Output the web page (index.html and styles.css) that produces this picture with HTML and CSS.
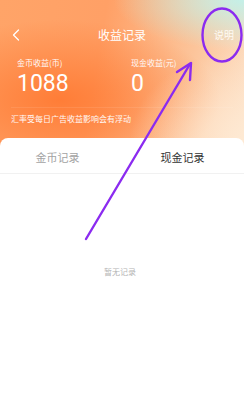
FILE: index.html
```html
<!DOCTYPE html>
<html lang="zh">
<head>
<meta charset="utf-8">
<link rel="stylesheet" href="styles.css">
</head>
<body>
<div class="page">
  <header class="hero">
    <div class="status"></div>
    <div class="nav">
      <svg class="back" width="8" height="12" viewBox="0 0 8 12"><path d="M6.5 1 L1.5 6 L6.5 11" fill="none" stroke="#fff" stroke-width="1.3" stroke-linecap="round" stroke-linejoin="round"/></svg>
      <div class="title">收益记录</div>
      <div class="help">说明</div>
    </div>
    <div class="stats">
      <div class="stat">
        <div class="label">金币收益(币)</div>
        <div class="value">1088</div>
      </div>
      <div class="stat">
        <div class="label">现金收益(元)</div>
        <div class="value">0</div>
      </div>
    </div>
    <div class="note">汇率受每日广告收益影响会有浮动</div>
  </header>
  <section class="card">
    <div class="tabs">
      <div class="tab">金币记录</div>
      <div class="tab active">现金记录</div>
    </div>
    <div class="empty">暂无记录</div>
  </section>
  <svg class="mark" width="244" height="418" viewBox="0 0 244 418">
    <ellipse cx="222" cy="35" rx="19.5" ry="26.5" fill="none" stroke="#8b2bf0" stroke-width="2.4"/>
    <path d="M86 239 L190 64" fill="none" stroke="#8b2bf0" stroke-width="2.4" stroke-linecap="round"/>
    <path d="M177 72 L191 63 L190 80" fill="none" stroke="#8b2bf0" stroke-width="2.4" stroke-linecap="round" stroke-linejoin="round"/>
  </svg>
</div>
</body>
</html>
```
FILE: styles.css
```css
* { box-sizing: border-box; }
html, body { margin: 0; padding: 0; background: #fff; }
body { font-family: "Noto Sans CJK SC", "Noto Sans", sans-serif; }
.page { position: relative; width: 244px; height: 418px; overflow: hidden; background: #fff; }
.hero {
  height: 146px;
  padding: 0 11px;
  color: #fff;
  background:
    radial-gradient(ellipse 130px 50px at 244px 0px, rgba(196,240,232,1), rgba(196,240,232,0) 100%),
    radial-gradient(ellipse 120px 90px at 250px 140px, rgba(254,234,212,1), rgba(254,234,212,0) 100%),
    radial-gradient(ellipse 160px 80px at 60px 100px, rgba(255,125,55,1), rgba(255,125,55,0) 100%),
    linear-gradient(100deg, #ffa468 0%, #ffa066 40%, #fcc49a 75%, #fde0c6 100%);
}
.status { height: 22px; }
.nav { height: 26px; display: flex; align-items: center; position: relative; }
.back { margin-left: 1px; }
.title { position: absolute; left: 0; right: 0; text-align: center; font-size: 12px; line-height: 26px; }
.help { margin-left: auto; font-size: 10px; line-height: 26px; margin-right: -1px; color: #fffaf3; }
.stats { display: grid; grid-template-columns: 114px 1fr; padding: 0 0 9px 6px; margin-top: 9px; border-bottom: 1px solid rgba(255,255,255,0.09); }
.label { font-size: 8px; line-height: 12px; opacity: 0.95; }
.value { font-family: Roboto, "Noto Sans", sans-serif; font-size: 23px; line-height: 28px; margin-top: 1px; }
.note { font-size: 8px; line-height: 12px; margin-top: 5px; opacity: 0.95; }
.card { position: relative; margin-top: -8px; background: #fff; border-radius: 8px 8px 0 0; }
.tabs { display: grid; grid-template-columns: 1fr 1fr; height: 36px; border-bottom: 1px solid #f1f1f1; }
.tab { font-size: 11px; line-height: 38px; text-align: center; color: #a3a3a3; padding-right: 7px; }
.tab.active { color: #333; padding-right: 1px; }
.empty { text-align: center; font-size: 8px; line-height: 12px; color: #b4b4b4; margin-top: 92px; padding-right: 4px; }
.mark { position: absolute; left: 0; top: 0; pointer-events: none; }
```
